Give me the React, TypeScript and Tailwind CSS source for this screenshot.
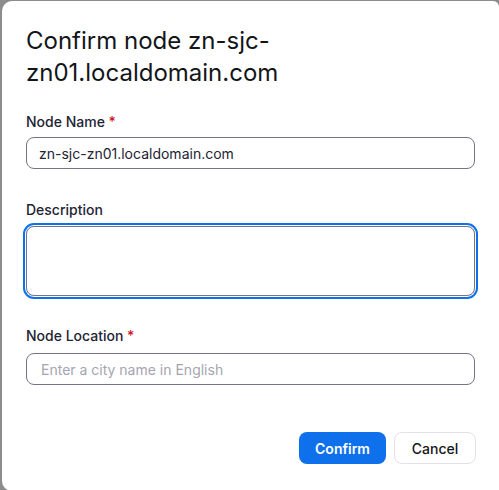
export default function App() {
  return (
    <div className="w-[499px] h-[490px] bg-[#8c8c8c] overflow-hidden" style={{ fontFamily: "Inter, 'Noto Sans', sans-serif" }}>
      <div className="ml-[2px] mt-[1px] w-[497px] h-[490px] bg-white rounded-l-[10px] rounded-tr-[6px] flex flex-col px-[24px] pt-[24px]">
        <h1 className="text-[24px] leading-[32px] text-[#131619] font-normal w-[300px]">
          Confirm node zn-sjc-zn01.localdomain.com
        </h1>
        <label className="mt-[24px] text-[14px] leading-[18px] font-medium text-[#232333]">
          Node Name <span className="text-[#c8171d]">*</span>
        </label>
        <input
          className="mt-[6px] h-[32px] w-[449px] rounded-[8px] border border-[#747487] px-[12px] text-[14px] text-[#232333] outline-none"
          defaultValue="zn-sjc-zn01.localdomain.com"
        />
        <label className="mt-[32px] text-[14px] leading-[18px] font-medium text-[#232333]">Description</label>
        <div className="mt-[7px] w-[449px] h-[70px] rounded-[8px] border border-[#747487] ring-2 ring-[#0e71eb] ring-offset-1"></div>
        <label className="mt-[31px] text-[14px] leading-[18px] font-medium text-[#232333]">
          Node Location <span className="text-[#c8171d]">*</span>
        </label>
        <input
          className="mt-[8px] h-[32px] w-[449px] rounded-[8px] border border-[#747487] px-[14px] text-[14px] text-[#232333] placeholder:text-[#a5a5b0] outline-none"
          placeholder="Enter a city name in English"
        />
        <div className="mt-[47px] flex justify-end gap-[8px] w-[450px]">
          <button className="h-[32px] w-[87px] rounded-[8px] bg-[#0e71eb] text-white text-[14px] font-semibold">Confirm</button>
          <button className="h-[32px] w-[82px] rounded-[8px] border border-[#dfe3e8] bg-white text-[#131619] text-[14px] font-medium">Cancel</button>
        </div>
      </div>
    </div>
  );
}
